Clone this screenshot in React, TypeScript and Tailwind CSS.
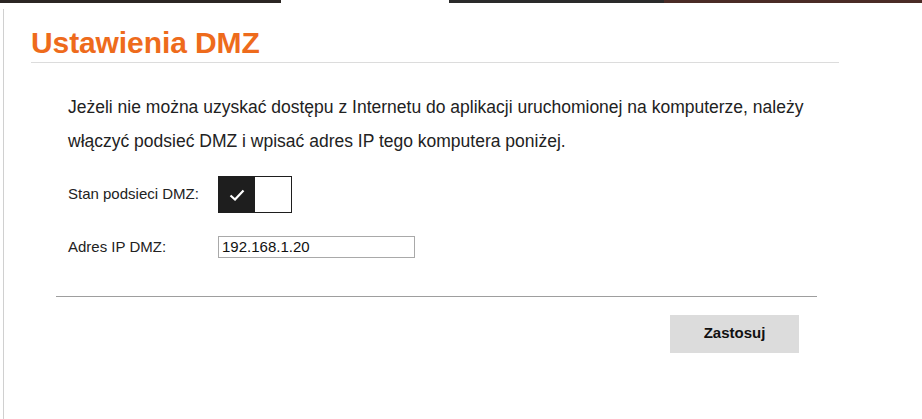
import React, { useState } from 'react'

const font = { fontFamily: '"Liberation Sans", Arial, sans-serif' }

const Toggle = ({ on, onChange }: { on: boolean; onChange: () => void }) => (
  <button onClick={onChange} className="flex h-[37px] w-[74px] border border-[#1e1e1e]">
    <span className={on ? 'flex h-full w-1/2 items-center justify-center bg-[#1e1e1e]' : 'h-full w-1/2 bg-white'}>
      {on && (
        <svg width="16" height="12" viewBox="0 0 16 12" fill="none">
          <path d="M1.5 6.5 L6 10.5 L14.5 1.5" stroke="#fff" strokeWidth="2.2" />
        </svg>
      )}
    </span>
    <span className={on ? 'h-full w-1/2 bg-white' : 'h-full w-1/2 bg-[#1e1e1e]'} />
  </button>
)

export default function App() {
  const [enabled, setEnabled] = useState(true)
  const [ip, setIp] = useState('192.168.1.20')

  return (
    <div className="h-[419px] w-[922px] overflow-hidden bg-white" style={font}>
      <div className="flex h-[3px]">
        <div className="w-[281px] bg-[#2b2623]" />
        <div className="w-[168px] bg-white" />
        <div className="w-[215px] bg-[#2a2a2a]" />
        <div className="flex-1 bg-[#4a2b26]" />
      </div>
      <div className="ml-[3px] mt-[6px] h-[410px] border-l border-[#d0d0d0]">
        <div className="pl-[27px] pr-[83px] pt-[18px]">
          <h1 className="border-b border-[#dcdcdc] pb-[3px] text-[30px] font-bold leading-[32px] tracking-[-0.1px] text-[#ee6b1c]">
            Ustawienia DMZ
          </h1>
        </div>
        <div className="pl-[64px] pt-[27px] pr-[60px]">
          <p className="text-[17.5px] leading-[34px] text-[#222]">
            Jeżeli nie można uzyskać dostępu z Internetu do aplikacji uruchomionej na komputerze, należy włączyć podsieć DMZ i wpisać adres IP tego komputera poniżej.
          </p>
        </div>
        <div className="flex flex-col gap-[23px] pl-[64px] pt-[18px]">
          <div className="flex items-center">
            <span className="w-[150px] text-[15px] text-[#222]">Stan podsieci DMZ:</span>
            <Toggle on={enabled} onChange={() => setEnabled(!enabled)} />
          </div>
          <div className="flex items-center">
            <span className="w-[150px] text-[15px] text-[#222]">Adres IP DMZ:</span>
            <input
              value={ip}
              onChange={e => setIp(e.target.value)}
              className="h-[22px] w-[197px] border border-[#a9a9a9] px-[3px] text-[15px] text-[#111] outline-none"
            />
          </div>
        </div>
        <div className="ml-[52px] mr-[105px] mt-[37px] border-t border-[#9e9e9e]" />
        <div className="mr-[123px] mt-[18px] flex justify-end">
          <button className="h-[38px] w-[129px] bg-[#dcdcdc] text-[15px] font-bold text-[#111]">Zastosuj</button>
        </div>
      </div>
    </div>
  )
}
